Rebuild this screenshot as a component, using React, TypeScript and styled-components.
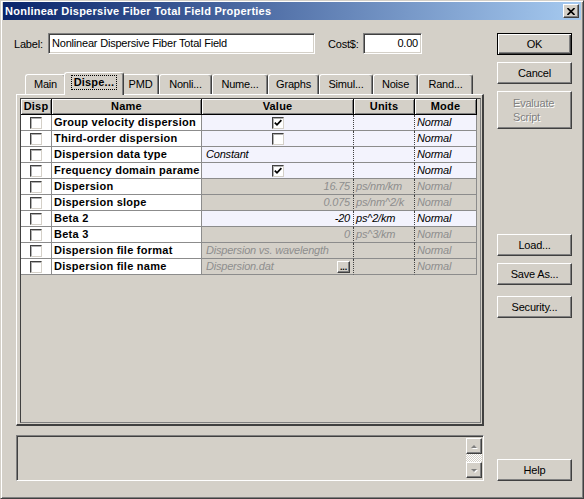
import styled, { createGlobalStyle, css } from "styled-components";

const GlobalStyle = createGlobalStyle`
  html, body {
    margin: 0;
    padding: 0;
    background: #d4d0c8;
  }
  body {
    font-family: "Liberation Sans", Arial, sans-serif;
    font-size: 11px;
    letter-spacing: -0.2px;
    color: #000;
  }
`;

const Window = styled.div`
  width: 584px;
  height: 499px;
  box-sizing: border-box;
  border: 1px solid;
  border-color: #d4d0c8 #404040 #404040 #d4d0c8;
  box-shadow: inset 1px 1px #fff, inset -1px -1px #808080;
  padding: 1px 2px 2px 2px;
  background: #d4d0c8;
  display: flex;
  flex-direction: column;
`;

const TitleBar = styled.div`
  height: 18px;
  flex: none;
  display: flex;
  align-items: center;
  justify-content: space-between;
  padding: 0 2px 0 2px;
  background: linear-gradient(to right, #0a246a, #a6caf0);
`;

const TitleText = styled.span`
  color: #fff;
  font-weight: bold;
  font-size: 11px;
  letter-spacing: 0.25px;
`;

const raised = css`
  box-sizing: border-box;
  border: 1px solid;
  border-color: #fff #404040 #404040 #fff;
  box-shadow: inset -1px -1px #808080;
  background: #d4d0c8;
`;

const sunken = css`
  box-sizing: border-box;
  border: 1px solid;
  border-color: #808080 #fff #fff #808080;
  box-shadow: inset 1px 1px #404040, inset -1px -1px #d4d0c8;
`;

const CloseButton = styled.div`
  ${raised};
  width: 16px;
  height: 14px;
  display: flex;
  align-items: center;
  justify-content: center;
`;

const Body = styled.div`
  flex: 1;
  display: flex;
  padding: 13px 9px 15px 10px;
  gap: 13px;
`;

const LeftColumn = styled.div`
  width: 471px;
  display: flex;
  flex-direction: column;
`;

const RightColumn = styled.div`
  width: 75px;
  display: flex;
  flex-direction: column;
`;

const FieldRow = styled.div`
  height: 21px;
  display: flex;
  align-items: center;
`;

const FieldLabel = styled.span<{ $w: number; $ml?: number }>`
  width: ${(p) => p.$w}px;
  margin-left: ${(p) => p.$ml ?? 0}px;
`;

const TextInput = styled.div<{ $w: number; $right?: boolean }>`
  ${sunken};
  width: ${(p) => p.$w}px;
  height: 21px;
  background: #fff;
  padding: 0 3px;
  line-height: 19px;
  text-align: ${(p) => (p.$right ? "right" : "left")};
  white-space: nowrap;
`;

const TabStrip = styled.div`
  height: 22px;
  margin-top: 18px;
  padding-left: 12px;
  display: flex;
  align-items: flex-end;
`;

const Tab = styled.div<{ $w: number; $active?: boolean }>`
  box-sizing: border-box;
  width: ${(p) => p.$w}px;
  height: 20px;
  border: 1px solid;
  border-color: #fff #404040 transparent #fff;
  border-bottom: none;
  border-radius: 3px 3px 0 0;
  box-shadow: inset -1px 0 #808080;
  background: #d4d0c8;
  display: flex;
  align-items: center;
  justify-content: center;
  padding-bottom: 1px;
  ${(p) =>
    p.$active &&
    css`
      width: ${p.$w + 4}px;
      height: 23px;
      margin: 0 -2px -1px;
      position: relative;
      z-index: 1;
      font-weight: bold;
      letter-spacing: 0.2px;
      padding-bottom: 3px;
    `}
`;

const FocusLabel = styled.span`
  outline: 1px dotted #000;
  outline-offset: 0;
  padding: 0 2px;
  line-height: 13px;
`;

const Panel = styled.div`
  box-sizing: border-box;
  width: 468px;
  height: 332px;
  margin-left: 3px;
  border: 1px solid;
  border-color: #fff #404040 #404040 #fff;
  border-width: 1px 2px 2px 1px;
  padding: 3px 1px 1px 3px;
`;

const GridFrame = styled.div`
  box-sizing: border-box;
  height: 100%;
  border: 1px solid #404040;
  border-right-color: #808080;
  border-bottom-color: #808080;
  background: #d4d0c8;
  overflow: hidden;
`;

const columns = "31px 150px 152px 61px 62px";

const HeaderRow = styled.div`
  display: grid;
  grid-template-columns: ${columns};
  height: 16px;
`;

const HeaderCell = styled.div`
  box-sizing: border-box;
  border-right: 1px solid #000;
  border-bottom: 1px solid #000;
  box-shadow: inset 1px 1px #fff, inset -1px -1px #808080;
  font-weight: bold;
  letter-spacing: 0.2px;
  text-align: center;
  line-height: 15px;
`;

const Row = styled.div`
  display: grid;
  grid-template-columns: ${columns};
  height: 16px;
`;

const Cell = styled.div<{ $bg?: string; $dotted?: boolean }>`
  box-sizing: border-box;
  background: ${(p) => p.$bg ?? "#fff"};
  border-bottom: 1px solid #8c8c8c;
  border-right: 1px ${(p) => (p.$dotted ? "dotted #404040" : "solid #8c8c8c")};
  line-height: 15px;
  white-space: nowrap;
  overflow: hidden;
  display: flex;
  align-items: center;
`;

const DispCell = styled(Cell)`
  justify-content: center;
`;

const NameCell = styled(Cell)`
  font-weight: bold;
  letter-spacing: 0.25px;
  padding-left: 2px;
`;

const ValueCell = styled(Cell)<{ $muted?: boolean; $justify?: string }>`
  font-style: italic;
  color: ${(p) => (p.$muted ? "#8e8e8e" : "#000")};
  justify-content: ${(p) => p.$justify ?? "flex-start"};
  padding: 0 3px 0 4px;
`;

const TextCell = styled(Cell)<{ $muted?: boolean }>`
  font-style: italic;
  color: ${(p) => (p.$muted ? "#8e8e8e" : "#000")};
  padding-left: 2px;
`;

const CheckBox = styled.div`
  box-sizing: border-box;
  width: 12px;
  height: 12px;
  background: #fff;
  border: 1px solid;
  border-color: #404040 #d4d0c8 #d4d0c8 #404040;
  box-shadow: inset 1px 1px #b0b0b0;
  display: flex;
  align-items: center;
  justify-content: center;
`;

const BrowseButton = styled.div`
  ${raised};
  width: 13px;
  height: 12px;
  margin-left: auto;
  font-size: 9px;
  font-weight: bold;
  font-style: normal;
  color: #000;
  line-height: 11px;
  text-align: center;
`;

const StatusBox = styled.div`
  ${sunken};
  width: 468px;
  height: 46px;
  margin: 9px 0 0 3px;
  background: #d4d0c8;
  display: flex;
  justify-content: flex-end;
  padding: 2px 1px 2px 2px;
`;

const ScrollBar = styled.div`
  width: 16px;
  display: flex;
  flex-direction: column;
`;

const ScrollArrow = styled.div`
  ${raised};
  width: 16px;
  height: 16px;
  flex: none;
  display: flex;
  align-items: center;
  justify-content: center;
`;

const ScrollTrack = styled.div`
  flex: 1;
  background: repeating-conic-gradient(#fff 0 25%, #d4d0c8 0 50%) 0 0 / 2px 2px;
`;

const Button = styled.div<{ $h?: number; $default?: boolean; $mt?: number; $disabled?: boolean }>`
  ${raised};
  width: 75px;
  height: ${(p) => p.$h ?? 22}px;
  margin-top: ${(p) => (p.$mt === undefined ? "0" : `${p.$mt}px`)};
  display: flex;
  align-items: center;
  justify-content: center;
  ${(p) =>
    p.$default &&
    css`
      outline: 1px solid #000;
      outline-offset: -1px;
      border-color: #000;
      box-shadow: inset 1px 1px #fff, inset -1px -1px #404040, inset -2px -2px #808080;
    `}
  ${(p) =>
    p.$disabled &&
    css`
      color: #808080;
      text-shadow: 1px 1px #fff;
      justify-content: flex-start;
      padding-left: 15px;
      line-height: 14px;
    `}
`;

const HelpButton = styled(Button)`
  margin-top: auto;
`;

type Row = {
  name: string;
  enabled: boolean;
  value?: string;
  check?: boolean;
  align?: "left" | "right";
  units?: string;
  browse?: boolean;
};

const rows: Row[] = [
  { name: "Group velocity dispersion", enabled: true, check: true },
  { name: "Third-order dispersion", enabled: true, check: false },
  { name: "Dispersion data type", enabled: true, value: "Constant", align: "left" },
  { name: "Frequency domain parame", enabled: true, check: true },
  { name: "Dispersion", enabled: false, value: "16.75", align: "right", units: "ps/nm/km" },
  { name: "Dispersion slope", enabled: false, value: "0.075", align: "right", units: "ps/nm^2/k" },
  { name: "Beta 2", enabled: true, value: "-20", align: "right", units: "ps^2/km" },
  { name: "Beta 3", enabled: false, value: "0", align: "right", units: "ps^3/km" },
  { name: "Dispersion file format", enabled: false, value: "Dispersion vs. wavelength", align: "left" },
  { name: "Dispersion file name", enabled: false, value: "Dispersion.dat", align: "left", browse: true },
];

const tabs = [
  { label: "Main", w: 41 },
  { label: "Dispe...", w: 56, active: true },
  { label: "PMD", w: 37 },
  { label: "Nonli...", w: 53 },
  { label: "Nume...", w: 56 },
  { label: "Graphs", w: 51 },
  { label: "Simul...", w: 54 },
  { label: "Noise", w: 45 },
  { label: "Rand...", w: 55 },
];

const Check = ({ checked }: { checked?: boolean }) => (
  <CheckBox>
    {checked && (
      <svg width="8" height="8" viewBox="0 0 8 8">
        <path d="M0.8 3.6 L3 5.8 L7.4 1.2" fill="none" stroke="#000" strokeWidth="1.8" />
      </svg>
    )}
  </CheckBox>
);

const Arrow = ({ down }: { down?: boolean }) => (
  <svg width="8" height="5" viewBox="0 0 8 5">
    <polygon points={down ? "1,1 7,1 4,4" : "1,4 7,4 4,1"} fill="#fff" transform="translate(1,1)" />
    <polygon points={down ? "1,1 7,1 4,4" : "1,4 7,4 4,1"} fill="#808080" />
  </svg>
);

export default function App() {
  return (
    <>
      <GlobalStyle />
      <Window>
        <TitleBar>
          <TitleText>Nonlinear Dispersive Fiber Total Field Properties</TitleText>
          <CloseButton>
            <svg width="8" height="7" viewBox="0 0 8 7">
              <path d="M0.5 0 L7.5 7 M7.5 0 L0.5 7" stroke="#000" strokeWidth="1.6" />
            </svg>
          </CloseButton>
        </TitleBar>
        <Body>
          <LeftColumn>
            <FieldRow>
              <FieldLabel $w={34} $ml={1}>Label:</FieldLabel>
              <TextInput $w={267}>Nonlinear Dispersive Fiber Total Field</TextInput>
              <FieldLabel $w={35} $ml={13}>Cost$:</FieldLabel>
              <TextInput $w={59} $right>0.00</TextInput>
            </FieldRow>
            <TabStrip>
              {tabs.map((t) => (
                <Tab key={t.label} $w={t.w} $active={t.active}>
                  {t.active ? <FocusLabel>{t.label}</FocusLabel> : t.label}
                </Tab>
              ))}
            </TabStrip>
            <Panel>
              <GridFrame>
                <HeaderRow>
                  <HeaderCell>Disp</HeaderCell>
                  <HeaderCell>Name</HeaderCell>
                  <HeaderCell>Value</HeaderCell>
                  <HeaderCell>Units</HeaderCell>
                  <HeaderCell>Mode</HeaderCell>
                </HeaderRow>
                {rows.map((r) => {
                  const bg = r.enabled ? "#f3f3fd" : "#d4d0c8";
                  const muted = !r.enabled;
                  return (
                    <Row key={r.name}>
                      <DispCell>
                        <Check />
                      </DispCell>
                      <NameCell>{r.name}</NameCell>
                      <ValueCell
                        $bg={bg}
                        $muted={muted}
                        $dotted
                        $justify={
                          r.check !== undefined ? "center" : r.align === "right" ? "flex-end" : "flex-start"
                        }
                      >
                        {r.check !== undefined ? <Check checked={r.check} /> : r.value}
                        {r.browse && <BrowseButton>...</BrowseButton>}
                      </ValueCell>
                      <TextCell $bg={bg} $muted={muted} $dotted>
                        {r.units ?? ""}
                      </TextCell>
                      <TextCell $bg={bg} $muted={muted}>
                        Normal
                      </TextCell>
                    </Row>
                  );
                })}
              </GridFrame>
            </Panel>
            <StatusBox>
              <ScrollBar>
                <ScrollArrow>
                  <Arrow />
                </ScrollArrow>
                <ScrollTrack />
                <ScrollArrow>
                  <Arrow down />
                </ScrollArrow>
              </ScrollBar>
            </StatusBox>
          </LeftColumn>
          <RightColumn>
            <Button $default>OK</Button>
            <Button $mt={7}>Cancel</Button>
            <Button $mt={7} $h={38} $disabled>
              Evaluate
              <br />
              Script
            </Button>
            <Button $mt={105}>Load...</Button>
            <Button $mt={7}>Save As...</Button>
            <Button $mt={11}>Security...</Button>
            <HelpButton>Help</HelpButton>
          </RightColumn>
        </Body>
      </Window>
    </>
  );
}
